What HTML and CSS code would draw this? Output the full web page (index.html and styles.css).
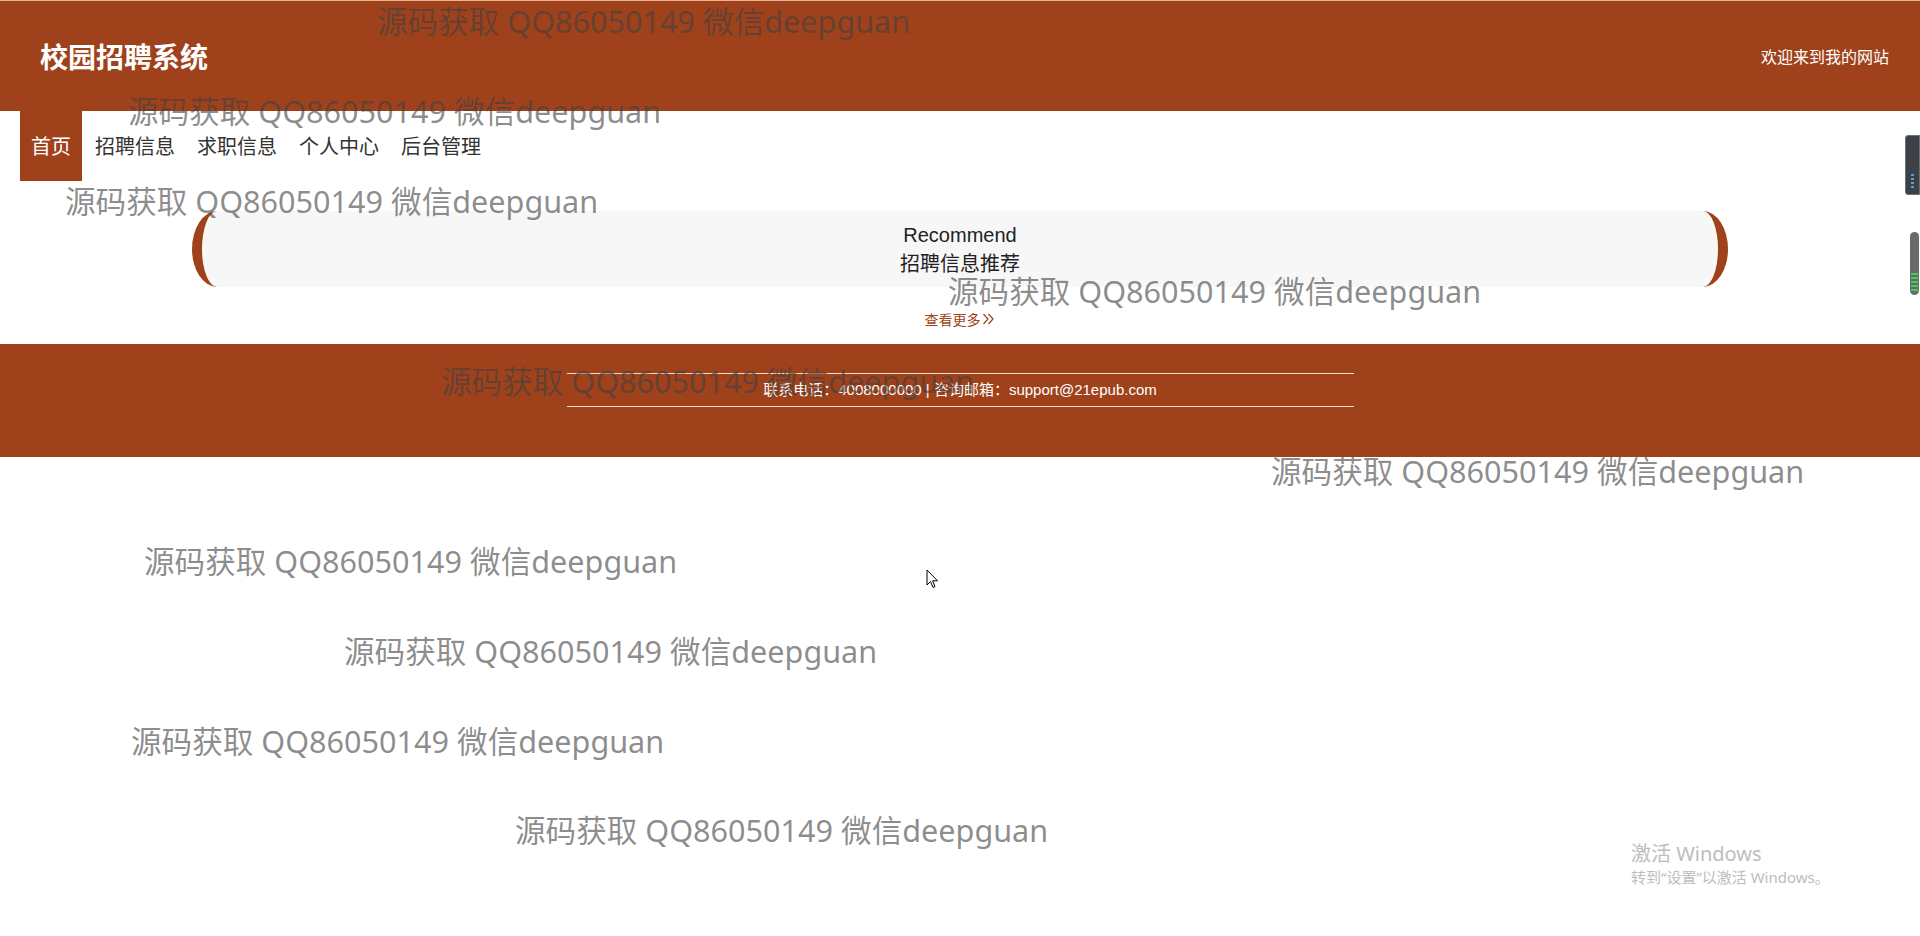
FILE: index.html
```html
<!DOCTYPE html>
<html lang="zh-CN">
<head>
<meta charset="utf-8">
<title>校园招聘系统</title>
<link rel="stylesheet" href="styles.css">
</head>
<body>
<div class="page">
  <header class="header">
    <div class="logo">校园招聘系统</div>
    <div class="welcome">欢迎来到我的网站</div>
  </header>
  <nav class="nav">
    <a class="nav-item active">首页</a>
    <a class="nav-item">招聘信息</a>
    <a class="nav-item">求职信息</a>
    <a class="nav-item">个人中心</a>
    <a class="nav-item">后台管理</a>
  </nav>
  <section class="recommend">
    <div class="rec-box">
      <div class="rec-en">Recommend</div>
      <div class="rec-cn">招聘信息推荐</div>
    </div>
    <a class="more">查看更多<svg class="chev" width="14" height="12" viewBox="0 0 14 12"><path d="M1.5 1 L6 6 L1.5 11 M6.5 1 L11 6 L6.5 11" fill="none" stroke="#9f421c" stroke-width="1.2"/></svg></a>
  </section>
  <footer class="footer">
    <div class="footer-inner">联系电话：4008000000 | 咨询邮箱：support@21epub.com</div>
  </footer>

  <div class="wm wm1">源码获取 QQ86050149 微信deepguan</div>
  <div class="wm wm2">源码获取 QQ86050149 微信deepguan</div>
  <div class="wm wm3">源码获取 QQ86050149 微信deepguan</div>
  <div class="wm wm4">源码获取 QQ86050149 微信deepguan</div>
  <div class="wm wm5">源码获取 QQ86050149 微信deepguan</div>
  <div class="wm wm6">源码获取 QQ86050149 微信deepguan</div>
  <div class="wm wm7">源码获取 QQ86050149 微信deepguan</div>
  <div class="wm wm8">源码获取 QQ86050149 微信deepguan</div>
  <div class="wm wm9">源码获取 QQ86050149 微信deepguan</div>
  <div class="wm wm10">源码获取 QQ86050149 微信deepguan</div>

  <div class="activate">
    <div class="act-title">激活 Windows</div>
    <div class="act-sub">转到“设置”以激活 Windows。</div>
  </div>

  <div class="widget-a"><span></span><span></span><span></span><span></span></div>
  <div class="widget-b"><span></span><span></span><span></span><span></span><span></span></div>

  <svg class="cursor" width="13" height="21" viewBox="0 0 13 21">
    <path d="M1 1 L1 16 L4.5 12.5 L7 18.5 L9 17.6 L6.6 11.8 L11.5 11.8 Z" fill="#fff" stroke="#000" stroke-width="1" stroke-linejoin="round"/>
  </svg>
</div>
</body>
</html>
```

FILE: styles.css
```css
* { box-sizing: border-box; }
html, body { margin: 0; padding: 0; }
body {
  background: #fff;
  font-family: "Liberation Sans", "Noto Sans CJK SC", sans-serif;
  color: #333;
}
.page {
  position: relative;
  width: 1920px;
  height: 936px;
  overflow: hidden;
}
.header {
  height: 111px;
  background: #9f421c;
  border-top: 1px solid #e7b596;
  display: flex;
  align-items: center;
  justify-content: space-between;
  padding: 0 31px 0 40px;
  color: #fff;
}
.logo {
  font-family: "Noto Sans CJK SC", sans-serif;
  font-size: 28px;
  font-weight: 700;
}
.welcome {
  font-family: "Noto Sans CJK SC", sans-serif;
  font-size: 16px;
}
.nav {
  display: flex;
  height: 70px;
  padding-left: 20px;
  background: #fff;
}
.nav-item {
  display: block;
  padding: 0 11px;
  line-height: 70px;
  font-family: "Noto Sans CJK SC", sans-serif;
  font-size: 20px;
  color: #333;
  text-decoration: none;
}
.nav-item.active {
  background: #9f421c;
  color: #fff;
  margin-right: 2px;
}
.recommend {
  padding-top: 30px;
  display: flex;
  flex-direction: column;
  align-items: center;
}
.rec-box {
  width: 1536px;
  height: 76px;
  background: #f7f7f7;
  border-left: 10px solid #9f421c;
  border-right: 10px solid #9f421c;
  border-radius: 25px / 38px;
  padding-top: 10px;
  text-align: center;
  font-size: 20px;
  line-height: 28px;
  color: #222;
}
.rec-cn { font-family: "Noto Sans CJK SC", sans-serif; }
.more {
  display: flex;
  align-items: center;
  margin-top: 22px;
  font-family: "Noto Sans CJK SC", sans-serif;
  font-size: 14px;
  line-height: 20px;
  color: #9f421c;
  text-decoration: none;
}
.chev { margin-left: 1px; }
.footer {
  margin-top: 15px;
  height: 113px;
  background: #9f421c;
  padding-top: 29px;
}
.footer-inner {
  width: 787px;
  margin: 0 auto;
  border-top: 1px solid #f3e0c6;
  border-bottom: 1px solid #f3e0c6;
  text-align: center;
  font-family: "Liberation Sans", "Noto Sans CJK SC", sans-serif;
  font-size: 15px;
  line-height: 32px;
  color: #fff;
}
.wm {
  position: absolute;
  white-space: nowrap;
  font-family: "Noto Sans", "Noto Sans CJK SC", sans-serif;
  font-size: 30.6px;
  line-height: 30px;
  color: rgba(64, 64, 64, 0.6);
  pointer-events: none;
}
.wm1 { left: 377px; top: 6px; }
.wm2 { left: 128px; top: 96px; }
.wm3 { left: 65px; top: 186px; }
.wm4 { left: 948px; top: 276px; }
.wm5 { left: 441px; top: 366px; }
.wm6 { left: 1271px; top: 456px; }
.wm7 { left: 144px; top: 546px; }
.wm8 { left: 344px; top: 636px; }
.wm9 { left: 131px; top: 726px; }
.wm10 { left: 515px; top: 815px; }
.activate {
  position: absolute;
  left: 1631px;
  top: 842px;
  color: #bdbdbd;
  font-family: "Noto Sans", "Noto Sans CJK SC", sans-serif;
}
.act-title { font-size: 20px; line-height: 24px; }
.act-sub { font-size: 15px; line-height: 22px; }
.widget-a {
  position: absolute;
  left: 1905px;
  top: 135px;
  width: 15px;
  height: 60px;
  background: #3d4147;
  border: 1px solid #6b7076;
  border-radius: 3px 0 0 3px;
  display: flex;
  flex-direction: column;
  justify-content: flex-end;
  align-items: center;
  gap: 2px;
  padding-bottom: 6px;
}
.widget-a span { width: 3px; height: 2px; background: #4fa3d9; }
.widget-b {
  position: absolute;
  left: 1910px;
  top: 232px;
  width: 9px;
  height: 63px;
  background: #6a6a6a;
  border-radius: 5px;
  display: flex;
  flex-direction: column;
  justify-content: flex-end;
  align-items: center;
  gap: 2px;
  padding-bottom: 4px;
}
.widget-b span { width: 7px; height: 2px; background: #3fcf5a; }
.cursor {
  position: absolute;
  left: 926px;
  top: 569px;
}
```
